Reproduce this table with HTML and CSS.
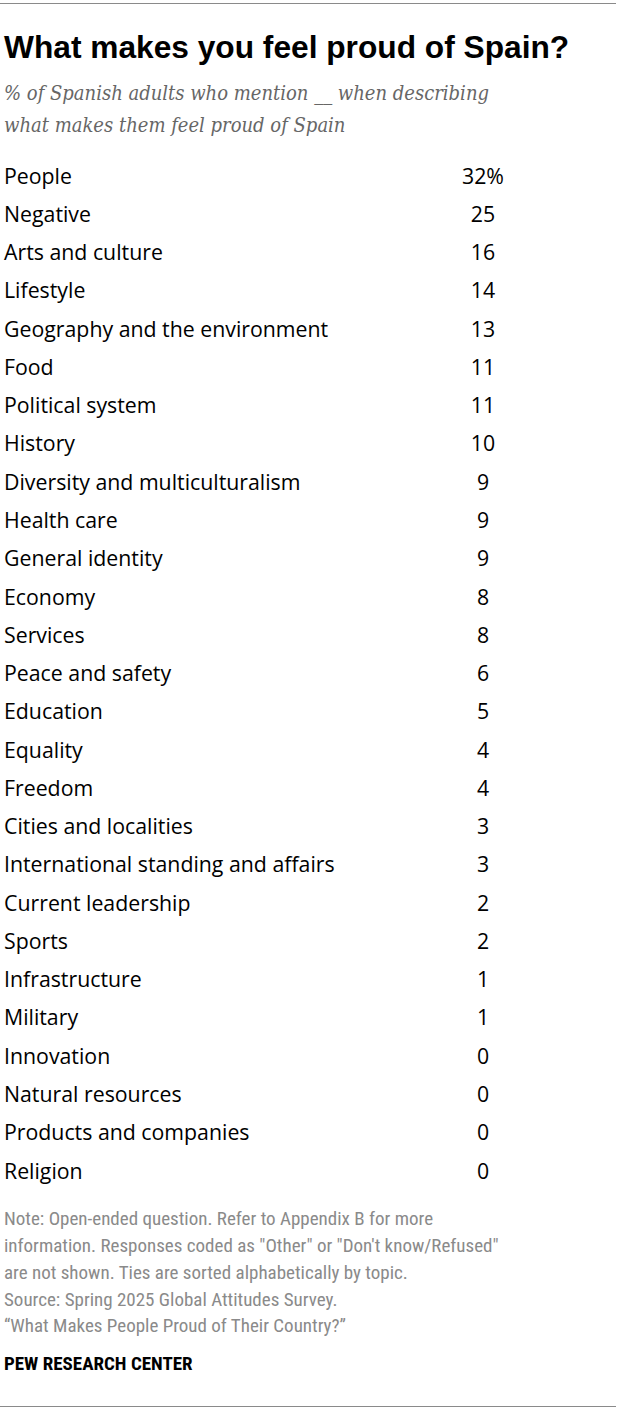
FILE: index.html
```html
<!DOCTYPE html>
<html>
<head>
<meta charset="utf-8">
<link rel="stylesheet" href="styles.css">
</head>
<body>
<div class="chart">
  <h1 class="title">What makes you feel proud of Spain?</h1>
  <p class="subtitle">% of Spanish adults who mention __ when describing what makes them feel proud of Spain</p>
  <div class="rows">
    <div class="row"><span class="label">People</span><span class="val">32%</span></div>
    <div class="row"><span class="label">Negative</span><span class="val">25</span></div>
    <div class="row"><span class="label">Arts and culture</span><span class="val">16</span></div>
    <div class="row"><span class="label">Lifestyle</span><span class="val">14</span></div>
    <div class="row"><span class="label">Geography and the environment</span><span class="val">13</span></div>
    <div class="row"><span class="label">Food</span><span class="val">11</span></div>
    <div class="row"><span class="label">Political system</span><span class="val">11</span></div>
    <div class="row"><span class="label">History</span><span class="val">10</span></div>
    <div class="row"><span class="label">Diversity and multiculturalism</span><span class="val">9</span></div>
    <div class="row"><span class="label">Health care</span><span class="val">9</span></div>
    <div class="row"><span class="label">General identity</span><span class="val">9</span></div>
    <div class="row"><span class="label">Economy</span><span class="val">8</span></div>
    <div class="row"><span class="label">Services</span><span class="val">8</span></div>
    <div class="row"><span class="label">Peace and safety</span><span class="val">6</span></div>
    <div class="row"><span class="label">Education</span><span class="val">5</span></div>
    <div class="row"><span class="label">Equality</span><span class="val">4</span></div>
    <div class="row"><span class="label">Freedom</span><span class="val">4</span></div>
    <div class="row"><span class="label">Cities and localities</span><span class="val">3</span></div>
    <div class="row"><span class="label">International standing and affairs</span><span class="val">3</span></div>
    <div class="row"><span class="label">Current leadership</span><span class="val">2</span></div>
    <div class="row"><span class="label">Sports</span><span class="val">2</span></div>
    <div class="row"><span class="label">Infrastructure</span><span class="val">1</span></div>
    <div class="row"><span class="label">Military</span><span class="val">1</span></div>
    <div class="row"><span class="label">Innovation</span><span class="val">0</span></div>
    <div class="row"><span class="label">Natural resources</span><span class="val">0</span></div>
    <div class="row"><span class="label">Products and companies</span><span class="val">0</span></div>
    <div class="row"><span class="label">Religion</span><span class="val">0</span></div>
  </div>
  <p class="note">Note: Open-ended question. Refer to Appendix B for more<br>information. Responses coded as "Other" or "Don't know/Refused"<br>are not shown. Ties are sorted alphabetically by topic.<br>Source: Spring 2025 Global Attitudes Survey.<br>“What Makes People Proud of Their Country?”</p>
  <p class="brand">PEW RESEARCH CENTER</p>
</div>
</body>
</html>
```
FILE: styles.css
```css
html, body {
  margin: 0;
  padding: 0;
  background: #fff;
}
.chart {
  margin: 3px 0 0 0;
  padding: 0 0 0 4px;
  border-top: 1px solid #8a8a8a;
  border-bottom: 1px solid #8a8a8a;
  box-sizing: border-box;
  width: 616px;
  height: 1404px;
}
.title {
  margin: 0;
  padding-top: 25px;
  font-family: "Liberation Sans", Arial, sans-serif;
  font-weight: bold;
  font-size: 31.7px;
  line-height: 36px;
  color: #000;
}
.subtitle {
  margin: 12px 0 0 0;
  width: 520px;
  font-family: "DejaVu Serif Condensed", "DejaVu Serif", Georgia, serif;
  font-style: italic;
  font-size: 20px;
  line-height: 32px;
  color: #666;
}
.rows {
  margin-top: 15px;
  display: flex;
  flex-direction: column;
}
.row {
  display: grid;
  grid-template-columns: 449px 60px;
  height: 38.27px;
  align-items: center;
  font-family: "Open Sans", "Liberation Sans", Arial, sans-serif;
  font-size: 21.3px;
  color: #000;
}
.val {
  text-align: center;
}
.note {
  margin: 17px 0 0 0;
  white-space: nowrap;
  font-family: "Liberation Sans Narrow", "Roboto Condensed", "Liberation Sans", sans-serif;
  font-size: 19px;
  line-height: 26.8px;
  color: #8a8a8a;
}
.brand {
  margin: 12px 0 0 0;
  font-family: "Liberation Sans Narrow", "Roboto Condensed", "Liberation Sans", sans-serif;
  font-weight: bold;
  font-size: 19px;
  color: #000;
}
```
